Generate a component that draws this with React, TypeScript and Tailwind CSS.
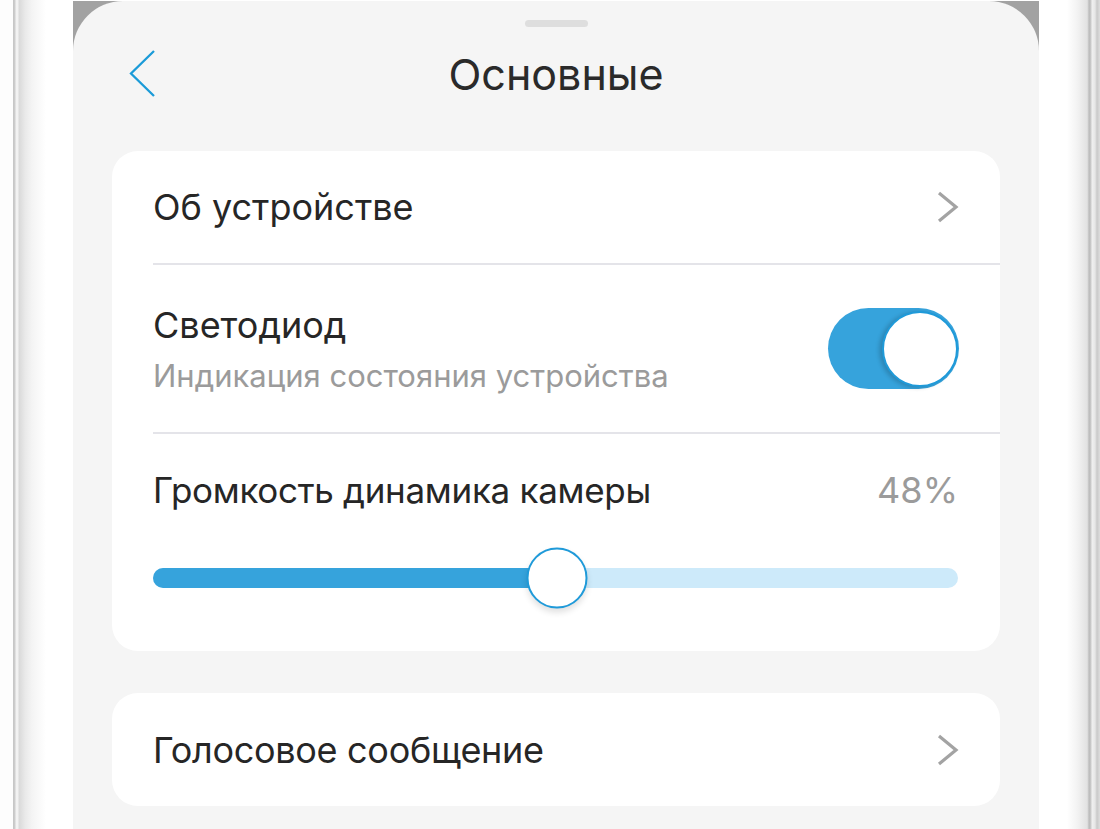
function ChevronRight() {
  return (
    <svg width="24" height="32" viewBox="0 0 24 32" fill="none">
      <polyline
        points="3,2 20,16 3,30"
        stroke="#a3a3a3"
        strokeWidth="3.2"
        strokeLinecap="butt"
        strokeLinejoin="miter"
      />
    </svg>
  );
}

function BackIcon() {
  return (
    <svg width="30" height="48" viewBox="0 0 30 48" fill="none">
      <polyline points="26,1 3,23.5 26,46" stroke="#1b9bd8" strokeWidth="2.3" />
    </svg>
  );
}

function Toggle() {
  return (
    <div className="flex h-[81px] w-[131px] items-center justify-end rounded-full bg-[#36a3dc] pr-[1px]">
      <div className="h-[76px] w-[76px] rounded-full border-2 border-[#1f9ad9] bg-white shadow-[-3px_1px_4px_rgba(0,0,0,0.18)]" />
    </div>
  );
}

function Slider({ value }: { value: number }) {
  return (
    <div className="relative h-[20px] w-full rounded-full bg-[#cdeafa]">
      <div className="h-full rounded-full bg-[#36a3dc]" style={{ width: `${value}%` }} />
      <div
        className="absolute top-1/2 h-[61px] w-[61px] -translate-x-1/2 -translate-y-1/2 rounded-full border-2 border-[#1f9ad9] bg-white shadow-[0_4px_6px_rgba(0,0,0,0.12)]"
        style={{ left: `${value}%` }}
      />
    </div>
  );
}

export default function App() {
  return (
    <div
      className="flex h-[829px] w-[1100px] overflow-hidden bg-white text-[#262626]"
      style={{ fontFamily: "Inter, 'Noto Sans', sans-serif" }}
    >
      {/* left bezel */}
      <div className="w-[73px] shrink-0 bg-[linear-gradient(to_right,#fdfdfd_0px,#fdfdfd_13px,#c4c4c4_13px,#cfcfcf_15px,#f2f2f2_16px,#f2f2f2_18px,#d9d9d9_19px,#e9e9e9_25px,#f4f4f4_32px,#ffffff_46px,#ffffff_73px)]" />

      <div className="flex-1 border-t border-white bg-[#a2a2a2]">
        <div className="flex h-full flex-col rounded-t-[50px] bg-[#f5f5f5] px-[39px]">
          <div className="mx-auto mt-[19px] h-[7px] w-[63px] rounded-full bg-[#dedede]" />

          <div className="grid h-[94px] grid-cols-[1fr_auto_1fr] items-center">
            <div className="pl-[16px]">
              <BackIcon />
            </div>
            <h1 className="text-[43px] font-normal text-[#2a2a2a]">Основные</h1>
            <div />
          </div>

          <div className="mt-[30px] flex h-[500px] flex-col rounded-[26px] bg-white pl-[41px]">
            <div className="flex h-[112px] items-center justify-between pr-[40px]">
              <span className="text-[36px] leading-none">Об устройстве</span>
              <ChevronRight />
            </div>
            <div className="h-[2px] bg-[#e4e4e9]" />

            <div className="flex h-[167px] items-center justify-between pr-[41px]">
              <div className="flex flex-col gap-[17px]">
                <span className="text-[36px] leading-none">Светодиод</span>
                <span className="text-[31px] leading-none text-[#9b9b9b]">
                  Индикация состояния устройства
                </span>
              </div>
              <Toggle />
            </div>
            <div className="h-[2px] bg-[#e4e4e9]" />

            <div className="flex flex-col pr-[42px] pt-[38px]">
              <div className="flex items-center justify-between">
                <span className="text-[35px] leading-none tracking-[-0.3px]">
                  Громкость динамика камеры
                </span>
                <span className="text-[36px] leading-none text-[#9b9b9b]">48%</span>
              </div>
              <div className="mt-[60px]">
                <Slider value={50.2} />
              </div>
            </div>
          </div>

          <div className="mt-[42px] flex h-[113px] items-center justify-between rounded-[26px] bg-white pl-[41px] pr-[40px]">
            <span className="text-[36px] leading-none tracking-[-0.3px]">Голосовое сообщение</span>
            <ChevronRight />
          </div>
        </div>
      </div>

      {/* right bezel */}
      <div className="w-[61px] shrink-0 bg-[linear-gradient(to_right,#ffffff_0px,#ffffff_28px,#f3f3f3_38px,#e2e2e2_48px,#d6d6d6_49px,#b9b9b9_50px,#cbcbcb_52px,#f0f0f0_53px,#e6e6e6_56px,#c9c9c9_58px,#dddddd_61px)]" />
    </div>
  );
}
